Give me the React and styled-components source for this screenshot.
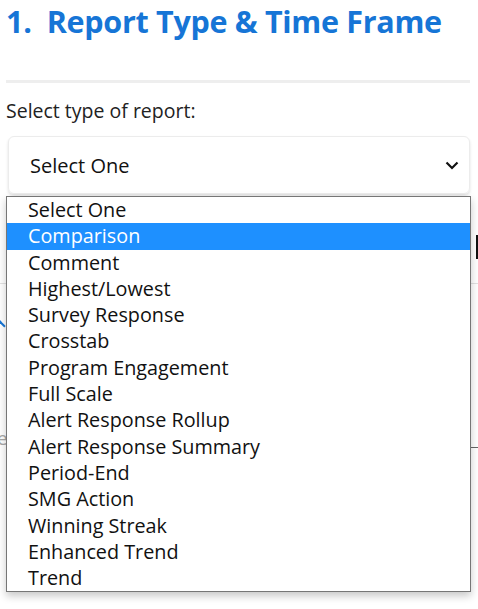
import React from 'react';
import styled, { createGlobalStyle } from 'styled-components';

const reportTypes = [
  'Select One',
  'Comparison',
  'Comment',
  'Highest/Lowest',
  'Survey Response',
  'Crosstab',
  'Program Engagement',
  'Full Scale',
  'Alert Response Rollup',
  'Alert Response Summary',
  'Period-End',
  'SMG Action',
  'Winning Streak',
  'Enhanced Trend',
  'Trend',
];

const Global = createGlobalStyle`
  body {
    margin: 0;
    background: #fff;
    font-family: "Open Sans", Lato, sans-serif;
    color: #1a1a1a;
    overflow: hidden;
  }
`;

const Chevron = () => (
  <svg width="14" height="9" viewBox="0 0 14 9" fill="none">
    <path d="M1.5 1.5 L7 7 L12.5 1.5" stroke="#111" strokeWidth="2.2" />
  </svg>
);

export default () => (
  <Page>
    <Global />
    <Title>1.&nbsp; Report Type &amp; Time Frame</Title>
    <Rule />
    <Label>Select type of report:</Label>
    <SelectWrap>
      <SelectBox>
        <span>Select One</span>
        <Chevron />
      </SelectBox>
      <Options>
        {reportTypes.map((t, i) => (
          <Option key={t} active={i === 1}>
            {t}
          </Option>
        ))}
      </Options>
    </SelectWrap>
    <EdgeRow>
      <EdgeBar />
    </EdgeRow>
    <Section>
      <Caret />
      <HintRow>
        <Hint>Date</Hint>
        <Divider />
      </HintRow>
    </Section>
  </Page>
);

const Page = styled.div`
  padding: 0 8px 0 6px;
  width: 478px;
  height: 609px;
  box-sizing: border-box;
  overflow: hidden;
`;

const Title = styled.h1`
  margin: 0;
  padding-top: 1px;
  font-size: 30.5px;
  line-height: 40px;
  font-weight: 700;
  letter-spacing: -0.3px;
  color: #1675d6;
  white-space: nowrap;
`;

const Rule = styled.div`
  height: 3px;
  background: #eeeeee;
  margin-top: 39px;
`;

const Label = styled.div`
  margin-top: 16px;
  font-size: 19.5px;
  line-height: 24px;
  color: #222;
`;

const SelectWrap = styled.div`
  position: relative;
  margin-top: 13px;
  padding-left: 2px;
`;

const SelectBox = styled.div`
  height: 58px;
  box-sizing: border-box;
  display: flex;
  align-items: center;
  justify-content: space-between;
  padding: 0 10px 0 21px;
  border: 1px solid #ececec;
  border-radius: 6px;
  box-shadow: 0 2px 3px rgba(0, 0, 0, 0.12);
  font-size: 20px;
  color: #111;
`;

const Options = styled.ul`
  position: absolute;
  top: 60px;
  left: 0;
  right: -1px;
  margin: 0;
  padding: 0;
  list-style: none;
  background: #fff;
  border: 1px solid #767676;
  box-shadow: 0 4px 8px rgba(0, 0, 0, 0.22);
  z-index: 2;
`;

const Option = styled.li`
  height: 26.3px;
  line-height: 26px;
  padding-left: 21px;
  font-size: 19.8px;
  color: ${p => (p.active ? '#fff' : '#111')};
  background: ${p => (p.active ? '#1e90ff' : 'transparent')};
`;

/* the part of the form that the open list covers */
const EdgeRow = styled.div`
  display: flex;
  justify-content: flex-end;
  margin: 41px -8px 0 0;
`;

const EdgeBar = styled.div`
  width: 2px;
  height: 24px;
  background: #111;
`;

const Section = styled.div`
  margin: 24px -8px 0 -6px;
  padding-top: 38px;
  border-top: 1px solid #e2e2e2;
`;

const Caret = styled.div`
  width: 6px;
  height: 6px;
  margin-left: -4px;
  border-left: 2px solid #1675d6;
  border-top: 2px solid #1675d6;
  transform: rotate(45deg);
`;

const HintRow = styled.div`
  display: flex;
  align-items: flex-end;
  margin-top: 98px;
`;

const Hint = styled.div`
  margin-left: -34px;
  font-size: 19px;
  line-height: 20px;
  color: #a8a8a8;
`;

const Divider = styled.div`
  flex: 1;
  height: 1px;
  margin-left: 12px;
  background: #666;
`;
